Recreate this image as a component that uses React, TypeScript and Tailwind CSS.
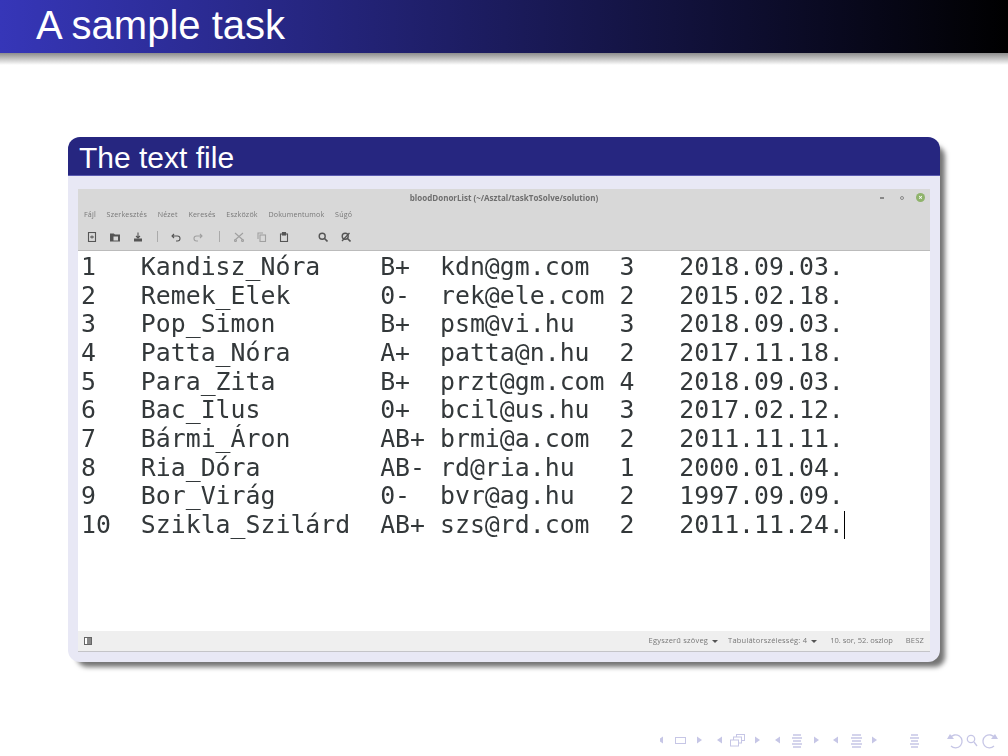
const rows = [
  "1   Kandisz_Nóra    B+  kdn@gm.com  3   2018.09.03.",
  "2   Remek_Elek      0-  rek@ele.com 2   2015.02.18.",
  "3   Pop_Simon       B+  psm@vi.hu   3   2018.09.03.",
  "4   Patta_Nóra      A+  patta@n.hu  2   2017.11.18.",
  "5   Para_Zita       B+  przt@gm.com 4   2018.09.03.",
  "6   Bac_Ilus        0+  bcil@us.hu  3   2017.02.12.",
  "7   Bármi_Áron      AB+ brmi@a.com  2   2011.11.11.",
  "8   Ria_Dóra        AB- rd@ria.hu   1   2000.01.04.",
  "9   Bor_Virág       0-  bvr@ag.hu   2   1997.09.09.",
];

const menus = ["Fájl", "Szerkesztés", "Nézet", "Keresés", "Eszközök", "Dokumentumok", "Súgó"];

function Caret() {
  return <span className="inline-block w-0 h-0 border-x-[3px] border-x-transparent border-t-[3px] border-t-[#555] ml-1 align-middle" />;
}

function Ico({ className, children }: { className: string; children: React.ReactNode }) {
  return (
    <svg viewBox="0 0 10 10" className={`w-[10px] h-[10px] shrink-0 ${className}`} fill="none" stroke="currentColor" strokeWidth="1.1">
      {children}
    </svg>
  );
}

function Nav() {
  const c = "#c6c6e6";
  const tri = (x: number, dir: number, y = 740) => (
    <polygon points={`${x},${y} ${x + dir * 5},${y - 3.5} ${x + dir * 5},${y + 3.5}`} fill={c} />
  );
  const lines = (x: number, w: number) => (
    <g stroke={c} strokeWidth="1.5">
      {[735, 738, 741, 744, 747].map((y, i) => (
        <line key={y} x1={x + (i % 2 ? 0 : 1)} x2={x + w - (i % 2 ? 0 : 1)} y1={y} y2={y} />
      ))}
    </g>
  );
  return (
    <svg width="348" height="31" viewBox="660 725 348 31" className="block ml-auto mt-[63px]">
      {tri(658, 1)}
      <rect x="675.5" y="737.5" width="10" height="6" fill="none" stroke={c} />
      {tri(702, -1)}
      {tri(717, 1)}
      <g fill="#fff" stroke={c} strokeWidth="1">
        <rect x="736.5" y="734.5" width="8" height="6" />
        <rect x="733.5" y="737" width="8" height="6" />
        <rect x="730.5" y="740" width="8" height="6" />
      </g>
      {tri(760, -1)}
      {tri(775, 1)}
      {lines(792, 10)}
      {tri(819, -1)}
      {tri(833, 1)}
      {lines(851, 11)}
      {tri(877, -1)}
      {lines(910, 9)}
      <g fill="none" stroke={c} strokeWidth="1.3">
        <path d="M950 738 a6.5 6.5 0 1 1 1 8" />
        <polygon points="947,739 954,739 950,734" fill={c} stroke="none" />
        <circle cx="971" cy="739" r="3.7" />
        <line x1="974" y1="742" x2="977" y2="746" />
        <path d="M995 738 a6.5 6.5 0 1 0 -1 8" />
        <polygon points="998,739 991,739 995,734" fill={c} stroke="none" />
      </g>
    </svg>
  );
}

export default function App() {
  return (
    <div className="w-[1008px] h-[756px] bg-white overflow-hidden font-['Liberation_Sans',sans-serif]">
      <header className="h-[53px] pl-9 bg-[linear-gradient(to_right,#3636b8,#000000)] text-white text-[40px] leading-[51px]">
        A sample task
      </header>
      <div className="h-3 bg-[linear-gradient(to_bottom,#8c8c8c,#ffffff)]" />
      <section className="ml-[68px] mt-[72px] w-[872px] h-[525px] rounded-xl bg-[#e8e8f5] shadow-[7px_7px_5px_-2px_rgba(0,0,0,0.55)] flex flex-col">
        <h2 className="h-[39px] pl-[11px] rounded-t-xl bg-[#262680] border-b border-[#5a5ab0] text-white text-[30px] leading-[41px] font-normal shrink-0">
          The text file
        </h2>
        <div className="mx-[10px] mt-[13px] h-[463px] flex flex-col blur-[0.3px] font-['Open_Sans',sans-serif]">
          <div className="h-[62px] bg-[#d8d8d8] border-b border-[#bbbbbb] shrink-0 flex flex-col text-[#666]">
            <div className="h-[18px] flex items-center relative shrink-0">
              <span className="mx-auto text-[8px] font-bold text-[#6e6e6e]">bloodDonorList (~/Asztal/taskToSolve/solution)</span>
              <div className="absolute right-[5px] top-[4px] flex items-center">
                <span className="w-[4px] h-[2px] bg-[#888] mr-[16px]" />
                <span className="w-[4px] h-[4px] rounded-full border border-[#888] mr-[12px]" />
                <span className="w-[9px] h-[9px] rounded-full bg-[#8fb36b] text-white text-[7px] leading-[9px] text-center font-bold">×</span>
              </div>
            </div>
            <div className="h-[14px] pl-[6px] flex items-center gap-[10.7px] text-[7.1px] tracking-[0.18px] text-[#777]">
              {menus.map((m) => <span key={m}>{m}</span>)}
            </div>
            <div className="h-[29px] pt-[2px] pl-[9px] flex items-center text-[#555]">
              <Ico className="mr-[13px]"><rect x="1.5" y="0.5" width="7" height="9" /><path d="M3 5h4M5 3.5v3" /></Ico>
              <Ico className="mr-[13px]"><path d="M0.5 9V2h3l1 1h5v6z" fill="currentColor" /><rect x="3.5" y="4.5" width="4.5" height="4" fill="#d8d8d8" stroke="none" /></Ico>
              <Ico className="mr-[14px]"><path d="M5 0.5v5M3 4l2 2 2-2" /><rect x="1" y="6.5" width="8" height="3" fill="currentColor" stroke="none" /></Ico>
              <span className="w-px h-[11px] bg-[#aaa] mr-[13px]" />
              <Ico className="mr-[12px]"><path d="M1 4h5.5a2.2 2.2 0 0 1 0 5H5M3 2L1 4l2 2" /></Ico>
              <Ico className="mr-[16px] text-[#a0a0a0]"><path d="M9 4H3.5a2.2 2.2 0 0 0 0 5H5M7 2l2 2-2 2" /></Ico>
              <span className="w-px h-[11px] bg-[#aaa] mr-[14px]" />
              <Ico className="mr-[13px] text-[#a0a0a0]"><path d="M1 1l8 7M9 1L1 8" /><circle cx="1.5" cy="8.5" r="1" /><circle cx="8.5" cy="8.5" r="1" /></Ico>
              <Ico className="mr-[12px] text-[#a0a0a0]"><path d="M1 7V1h5" /><rect x="3" y="3" width="5.5" height="6.5" /></Ico>
              <Ico className="mr-[29px]"><rect x="1.5" y="2" width="7" height="7.5" /><rect x="3.5" y="0.5" width="3" height="2.5" fill="currentColor" /></Ico>
              <Ico className="mr-[13px]"><circle cx="4.2" cy="4.2" r="3" strokeWidth="1.4" /><path d="M6.5 6.5L9.5 9.5" strokeWidth="1.6" /></Ico>
              <Ico className=""><circle cx="4.2" cy="4.2" r="3" strokeWidth="1.4" /><path d="M6.5 6.5L9.5 9.5" strokeWidth="1.6" /><path d="M1 9L8.5 1" strokeWidth="1.3" /></Ico>
            </div>
          </div>
          <div className="flex-1 bg-white pt-[2px] pl-[3px] text-[24.85px] leading-[28.67px] text-[#33383a] font-['DejaVu_Sans_Mono',monospace] whitespace-pre">
            {rows.map((r) => <div key={r}>{r}</div>)}
            <div className="flex items-center">
              <span>10  Szikla_Szilárd  AB+ szs@rd.com  2   2011.11.24.</span>
              <span className="w-px h-[28px] bg-black" />
            </div>
          </div>
          <div className="h-[21px] bg-[#efefef] border-b border-[#c4c4c8] shrink-0 flex items-center text-[7.5px] text-[#777] pr-[6px]">
            <span className="ml-[6px] w-[8px] h-[8px] border border-[#666] bg-[linear-gradient(to_right,#fff_35%,#888_35%)]" />
            <span className="ml-auto tracking-[0.2px]">Egyszerű szöveg</span><Caret />
            <span className="ml-[10px] tracking-[0.2px]">Tabulátorszélesség: 4</span><Caret />
            <span className="ml-[13px]">10. sor, 52. oszlop</span>
            <span className="ml-[13px] tracking-[0.2px]">BESZ</span>
          </div>
        </div>
      </section>
      <Nav />
    </div>
  );
}
